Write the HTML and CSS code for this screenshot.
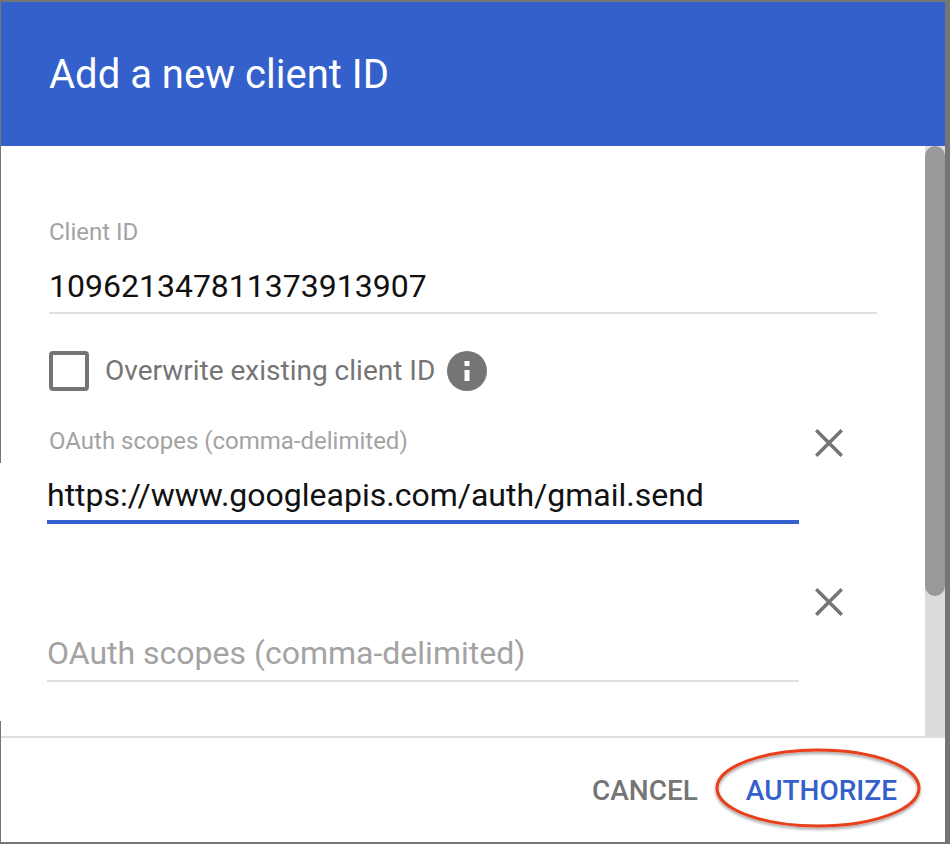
FILE: index.html
```html
<!DOCTYPE html>
<html lang="en">
<head>
<meta charset="utf-8">
<title>Add a new client ID</title>
<link rel="stylesheet" href="styles.css">
</head>
<body>
<div class="edge-patch"></div>
<div class="dialog">
  <header class="dialog-header"><h1 class="dialog-title">Add a new client ID</h1></header>
  <div class="dialog-body">
    <div class="dialog-content">
      <div class="field client-field">
        <div class="field-label">Client ID</div>
        <div class="field-value">109621347811373913907</div>
      </div>
      <div class="check-row">
        <span class="checkbox"></span>
        <span class="check-label">Overwrite existing client ID</span>
        <svg class="info-icon" viewBox="0 0 40 40" aria-hidden="true"><circle cx="20" cy="20" r="20" fill="#757575"/><rect x="17.5" y="19" width="5" height="11" fill="#fff"/><rect x="17.5" y="10" width="5" height="5" fill="#fff"/></svg>
      </div>
      <div class="scope-row scope-first">
        <div class="scope-field">
          <div class="scope-label">OAuth scopes (comma-delimited)</div>
          <div class="scope-value">https://www.googleapis.com/auth/gmail.send</div>
        </div>
        <svg class="close-icon" viewBox="0 0 28 28" aria-hidden="true"><path d="M1.2 1.2L26.8 26.8M26.8 1.2L1.2 26.8" stroke="#757575" stroke-width="3.5" fill="none"/></svg>
      </div>
      <div class="scope-row scope-second">
        <div class="scope-field">
          <div class="scope-placeholder">OAuth scopes (comma-delimited)</div>
        </div>
        <svg class="close-icon" viewBox="0 0 28 28" aria-hidden="true"><path d="M1.2 1.2L26.8 26.8M26.8 1.2L1.2 26.8" stroke="#757575" stroke-width="3.5" fill="none"/></svg>
      </div>
    </div>
    <div class="scrollbar"><div class="scroll-thumb"></div></div>
  </div>
  <footer class="dialog-footer">
    <span class="btn btn-cancel">CANCEL</span>
    <span class="btn btn-authorize">AUTHORIZE</span>
  </footer>
</div>
<svg class="annotation" width="216" height="90" viewBox="0 0 216 90" aria-hidden="true">
  <defs><filter id="sh" x="-10%" y="-10%" width="120%" height="130%"><feDropShadow dx="0" dy="2" stdDeviation="1.5" flood-color="#000" flood-opacity="0.4"/></filter></defs>
  <ellipse cx="108" cy="44" rx="101" ry="38" fill="none" stroke="#e8401c" stroke-width="3" filter="url(#sh)"/>
</svg>
</body>
</html>
```
FILE: styles.css
```css
* { box-sizing: border-box; }
html, body { margin: 0; height: 844px; overflow: hidden; }
body {
  position: relative;
  background: #757575;
  padding: 2px 5px 2px 1px;
  font-family: Roboto, "Noto Sans", sans-serif;
}
.edge-patch {
  position: absolute;
  left: 0; top: 463px;
  width: 1px; height: 258px;
  background: #fff;
}
.dialog {
  height: 840px;
  display: flex;
  flex-direction: column;
  background: #fff;
}
.dialog-header {
  height: 144px;
  background: #3460cb;
  padding: 50px 0 0 48px;
  flex: none;
}
.dialog-title {
  margin: 0;
  font-size: 40px;
  line-height: 46px;
  font-weight: 400;
  color: #fff;
}
.dialog-body {
  flex: 1;
  display: flex;
  min-height: 0;
}
.dialog-content {
  flex: 1;
  padding: 72px 0 0 48px;
}
.field-label {
  font-size: 24px;
  line-height: 28px;
  color: #a3a3a3;
}
.field-value {
  font-size: 32px;
  line-height: 40px;
  margin-top: 20px;
  padding-bottom: 6px;
  color: #111;
  border-bottom: 2px solid #e0e0e0;
  width: 828px;
}
.check-row {
  display: flex;
  align-items: center;
  margin-top: 37px;
  height: 40px;
}
.checkbox {
  width: 40px; height: 40px;
  border: 4px solid #757575;
  border-radius: 4px;
}
.check-label {
  margin-left: 16px;
  font-size: 28px;
  line-height: 36px;
  color: #757575;
}
.info-icon { width: 40px; height: 40px; margin-left: 12px; }
.scope-row { display: flex; align-items: flex-start; }
.scope-field { width: 752px; margin-left: -2px; }
.scope-first { margin-top: 36px; height: 161px; }
.scope-label {
  font-size: 24px;
  line-height: 28px;
  padding-left: 2px;
  color: #a3a3a3;
}
.scope-value {
  font-size: 32px;
  line-height: 40px;
  margin-top: 20px;
  padding-bottom: 5px;
  color: #111;
  border-bottom: 4px solid #3460cb;
}
.scope-placeholder {
  margin-top: 45px;
  font-size: 32px;
  line-height: 40px;
  padding-bottom: 7px;
  color: #a3a3a3;
  border-bottom: 2px solid #e0e0e0;
}
.close-icon { width: 28px; height: 28px; margin: 0 0 0 16px; }
.scope-first .close-icon { margin-top: 2px; }
.scrollbar {
  flex: none;
  width: 20px;
  background: #dcdcdc;
}
.scroll-thumb {
  height: 450px;
  background: #999;
  border-radius: 10px;
}
.dialog-footer {
  flex: none;
  height: 106px;
  border-top: 2px solid #e0e0e0;
  display: flex;
  justify-content: flex-end;
  align-items: center;
  gap: 48px;
  padding: 0 48px 0 0;
}
.btn { font-size: 28px; font-weight: 500; }
.btn-cancel { color: #757575; }
.btn-authorize { color: #3460cb; }
.annotation {
  position: absolute;
  left: 710px; top: 744px;
}
```
